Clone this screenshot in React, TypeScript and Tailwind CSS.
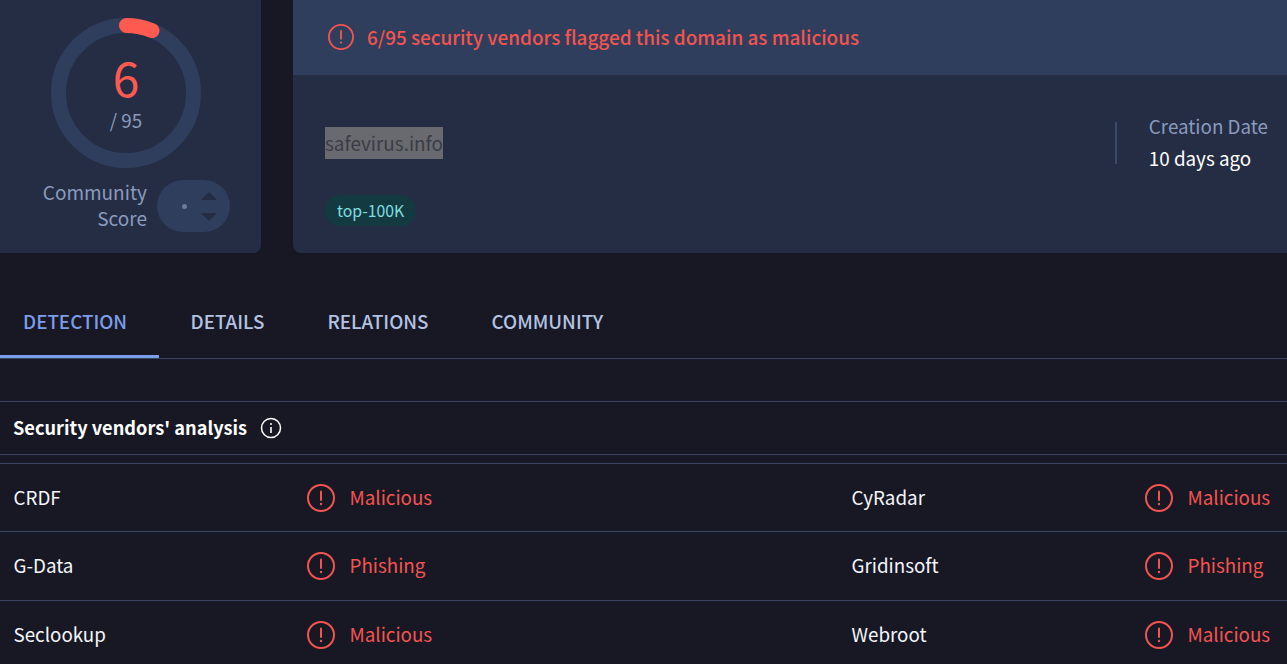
import React from 'react';

const RED = '#ff5a50';
const ICON_RED = '#f4544f';

// Circled exclamation used by the banner and every verdict cell.
const AlertIcon: React.FC<{ size: number }> = ({ size }) => (
  <svg width={size} height={size} viewBox="0 0 28 28" fill="none" className="shrink-0">
    <circle cx="14" cy="14" r="13" stroke={ICON_RED} strokeWidth="2" />
    <path d="M14 7.5v8.5" stroke={ICON_RED} strokeWidth="2" strokeLinecap="round" />
    <circle cx="14" cy="20" r="1.2" fill={ICON_RED} />
  </svg>
);

const ScoreRing: React.FC = () => (
  <div className="relative h-[150px] w-[150px]">
    <svg width="150" height="150" viewBox="0 0 150 150" fill="none">
      <circle cx="75" cy="75" r="67.5" stroke="#2f3e5c" strokeWidth="15" />
      <path d="M75.5 7.5A67.5 67.5 0 0 1 101 12.6" stroke={RED} strokeWidth="15" strokeLinecap="round" />
    </svg>
    <div className="absolute inset-0 flex flex-col items-center">
      <span className="mt-[33px] text-[48px] leading-[50px] text-[#ff5a50]">6</span>
      <span className="mt-[6px] text-[18.8px] leading-[26px] text-[#8a9bbd]">/ 95</span>
    </div>
  </div>
);

const VoteWidget: React.FC = () => (
  <div className="flex h-[52px] w-[73px] items-center rounded-[26px] bg-[#2f3e5c] pl-[25px]">
    <span className="h-[5px] w-[5px] rounded-full bg-[#6b7a99]" />
    <div className="ml-[14px] flex flex-col gap-[13px]">
      <svg width="16" height="8" viewBox="0 0 16 8" className="block"><path d="M8 0l8 8H0z" fill="#232c44" /></svg>
      <svg width="16" height="8" viewBox="0 0 16 8" className="block"><path d="M8 8L0 0h16z" fill="#232c44" /></svg>
    </div>
  </div>
);

const tabs = ['DETECTION', 'DETAILS', 'RELATIONS', 'COMMUNITY'];

const vendors = [
  { height: 'h-[68px]', cells: ['CRDF', 'Malicious', 'CyRadar', 'Malicious'] },
  { height: 'h-[69px] pb-[1px]', cells: ['G-Data', 'Phishing', 'Gridinsoft', 'Phishing'] },
  { height: 'h-[69px] pb-[1px]', cells: ['Seclookup', 'Malicious', 'Webroot', 'Malicious'] },
];

const VendorCell: React.FC<{ name: string; verdict: string; width: string }> = ({ name, verdict, width }) => (
  <div className={`flex items-center ${width}`}>
    <span className="w-[307px] pl-[13.5px] text-[18.8px] text-[#f4f6fb]">{name}</span>
    <AlertIcon size={28} />
    <span className="ml-[14.5px] text-[18.8px] text-[#f4544f]">{verdict}</span>
  </div>
);

export default function App() {
  return (
    <div
      className="h-[664px] w-[1287px] overflow-hidden bg-[#181825]"
      style={{ fontFamily: '"Noto Sans CJK JP", "Noto Sans", sans-serif' }}
    >
      <div className="flex gap-[32px]">
        <div className="flex h-[253px] w-[261px] flex-col rounded-br-lg bg-[#252d45] pt-[18px]">
          <div className="ml-[51px]">
            <ScoreRing />
          </div>
          <div className="mt-[11px] flex items-center gap-[10px] pl-[32px]">
            <div className="w-[115px] pb-[2px] text-right text-[19px] leading-[26px] text-[#8a9bbd]">
              Community
              <br />
              Score
            </div>
            <VoteWidget />
          </div>
        </div>

        <div className="flex h-[253px] flex-1 flex-col overflow-hidden rounded-bl-lg bg-[#252d45]">
          <div className="flex h-[75px] items-center gap-[13px] bg-[#2f3e5c] pb-[1px] pl-[35px]">
            <AlertIcon size={26} />
            <span className="text-[18.9px] font-medium text-[#f4544f]">
              6/95 security vendors flagged this domain as malicious
            </span>
          </div>
          <div className="flex flex-1 items-start justify-between pl-[32px] pr-[19px]">
            <div className="flex flex-col items-start">
              <span className="mt-[52px] bg-[#686a70] pb-[1px] text-[18.9px] leading-[31px] text-[#3a3d45]">
                safevirus.info
              </span>
              <span className="mt-[36px] flex h-[31px] items-center rounded-full bg-[#123a40] px-[12px] text-[15.8px] text-[#7fdfe0]">
                top-100K
              </span>
            </div>
            <div className="mt-[47px] flex h-[42px] items-center border-l-2 border-[#3a4a68] pl-[32px]">
              <div className="flex flex-col gap-[6px] pb-[2px]">
                <span className="text-[18.8px] leading-[26px] text-[#8a9bbd]">Creation Date</span>
                <span className="text-[18.8px] leading-[26px] text-white">10 days ago</span>
              </div>
            </div>
          </div>
        </div>
      </div>

      <div className="mt-[41px] flex h-[65px] items-stretch border-b border-[#3a4560]">
        {tabs.map((tab, i) => (
          <div
            key={tab}
            className={`flex h-[64px] items-center border-b-[3px] pb-[7px] text-[18.8px] font-medium ${
              i === 0
                ? 'w-[159px] border-[#7c9eea] pl-[23px] text-[#7c9eea]'
                : 'border-transparent px-[31.5px] text-[#b4c3e2]'
            }`}
          >
            {tab}
          </div>
        ))}
      </div>

      <div className="mt-[42px] flex h-[54px] items-center gap-[13px] border-y border-[#3a4560] pl-[13px]">
        <span className="text-[18.2px] font-bold text-white">Security vendors' analysis</span>
        <svg width="22" height="22" viewBox="0 0 22 22" fill="none">
          <circle cx="11" cy="11" r="9.5" stroke="#fff" strokeWidth="1.5" />
          <path d="M11 10v6" stroke="#fff" strokeWidth="1.6" />
          <circle cx="11" cy="7" r="1" fill="#fff" />
        </svg>
      </div>

      <div className="mt-[8px] border-t border-[#3a4560]">
        {vendors.map((row) => (
          <div key={row.cells[0]} className={`flex items-center border-b border-[#3a4560] ${row.height}`}>
            <VendorCell name={row.cells[0]} verdict={row.cells[1]} width="w-[838px]" />
            <VendorCell name={row.cells[2]} verdict={row.cells[3]} width="w-[449px]" />
          </div>
        ))}
      </div>
    </div>
  );
}
